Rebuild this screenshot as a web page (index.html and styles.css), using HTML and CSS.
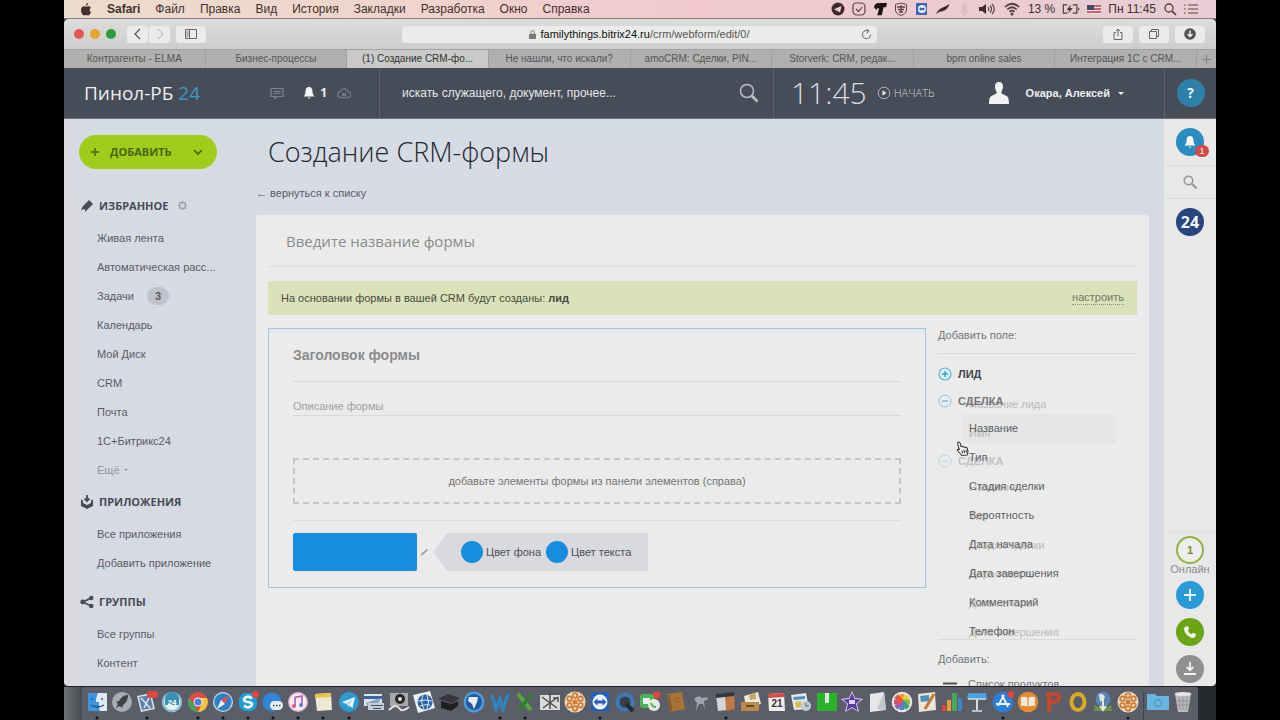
FILE: index.html
```
<!DOCTYPE html>
<html lang="ru">
<head>
<meta charset="utf-8">
<title>Создание CRM-формы</title>
<link rel="stylesheet" href="styles.css">
</head>
<body>
<div class="screen">
  <header class="menubar">
    <nav class="menus">
      <svg class="apple" viewBox="0 0 12 14"><path d="M8.3 0C8.4 1.400 7.200 2.900 5.900 2.900 5.700 1.500 7 .2 8.300 0zM10 7.400c0-1.400 1-2.200 1.300-2.400C10.300 3.400 8.700 3.500 8 3.500c-.8 0-1.300.5-1.900.5S4.700 3.500 4 3.500C2.200 3.500.6 5 .6 7.600.6 10.500 2.600 13.500 4 13.500c.8 0 1.200-.5 2.100-.5.900 0 1.300.5 2.100.5 1.400 0 2.700-2.200 3.200-3.500C10.400 9.500 10 8.500 10 7.400z" fill="#43302e"/></svg>
      <b>Safari</b><span>Файл</span><span>Правка</span><span>Вид</span><span>История</span><span>Закладки</span><span>Разработка</span><span>Окно</span><span>Справка</span>
    </nav>
    <div class="status">
      <svg viewBox="0 0 14 14"><circle cx="7" cy="7" r="6.500" fill="#3f2a2c"/><path d="M3 7.200 10.500 4 9 10.500 6.500 9z" fill="#f0d0d4"/></svg>
      <svg viewBox="0 0 14 14"><path d="M4 1h5a4 4 0 0 1 4 4v4a4 4 0 0 1-4 4H5a4 4 0 0 1-4-4V4a3 3 0 0 1 3-3zM4 7l2.500 2.500L10 5" fill="none" stroke="#5c4548" stroke-width="1.200"/></svg>
      <svg viewBox="0 0 16 14"><path d="M1 5C2 1 4 0 6 0h10l-1 5h-3l-2 9H5l2-8H5L4 8z" fill="#1c1416"/></svg>
      <svg viewBox="0 0 14 14"><path d="M1.500 2.500 7 1l5.500 1.500V8c0 3-3 4.500-5.500 5.500C4.500 12.500 1.500 11 1.500 8z" fill="none" stroke="#5c4548"/><path d="M3 5h8M4 7.500h6M5 10h4M7 3v8" stroke="#5c4548" stroke-width="1.300"/></svg>
      <svg viewBox="0 0 12 14"><rect x="0" y="1" width="11" height="12" fill="#3a66b8"/><circle cx="6" cy="7" r="4" fill="#f0f4fb"/><path d="M3 7l2-2v1h2V5l2 2-2 2V8H5v1z" fill="#3a66b8"/></svg>
      <svg viewBox="0 0 16 14"><path d="M0 13C3 5 9 6 15.500 1 14 7 9 10 4 10z" fill="#3f2a2c"/></svg>
      <svg viewBox="0 0 14 14"><path d="m4 4 6 6-3 3V1l3 3-6 6" fill="none" stroke="#d8b9bd" stroke-width="1.200"/></svg>
      <svg class="wide" viewBox="0 0 18 14"><path d="M1 5h3l4-3v10L4 9H1z" fill="#3f2a2c"/><path d="M10 5q1.500 2 0 4M12 3.500q3 3.500 0 7M14 2q4.500 5 0 10" fill="none" stroke="#5c4548" stroke-width="1.200"/></svg>
      <svg class="wide" viewBox="0 0 18 14"><path d="M2 5q7-6.500 14 0M4.300 7.500q4.700-4.500 9.400 0M6.600 9.800q2.400-2.200 4.800 0" fill="none" stroke="#54393c" stroke-width="1.700"/><circle cx="9" cy="12" r="1.500" fill="#54393c"/></svg>
      <span>13 %</span>
      <svg class="wide" viewBox="0 0 20 14"><path d="M6 2.500H1.500v9H6M12 2.500h4.500v9H12M18.500 5.500v3" fill="none" stroke="#54393c" stroke-width="1.300"/><path d="m10 2-5 6h3l-1 4 5-6H9z" fill="#54393c"/></svg>
      <svg viewBox="0 0 14 14"><rect x="0" y="3" width="14" height="9" fill="#efe3e4"/><path d="M0 4h14M0 7h14M0 10h14" stroke="#b0404d" stroke-width="1.600"/><rect y="3" width="7" height="5" fill="#4c4570"/></svg>
      <span>Пн 11:45</span>
      <svg viewBox="0 0 14 14"><circle cx="6" cy="6" r="4" fill="none" stroke="#54393c" stroke-width="1.300"/><path d="m9 9 4 4" stroke="#54393c" stroke-width="1.700"/></svg>
      <svg viewBox="0 0 14 14"><path d="M0 3h1.500M0 7h1.500M0 11h1.500M4 3h10M4 7h10M4 11h10" stroke="#8f7276" stroke-width="1.300"/></svg>
    </div>
  </header>

  <div class="window">
    <div class="toolbar">
      <div class="tools">
        <span class="light red"></span><span class="light amber"></span><span class="light green"></span>
        <div class="navpair">
          <button class="tool" aria-label="Назад"><svg viewBox="0 0 12 12"><path d="M8 1 3 6l5 5" fill="none" stroke="#555" stroke-width="1.300"/></svg></button>
          <button class="tool" aria-label="Вперёд"><svg viewBox="0 0 12 12"><path d="m4 1 5 5-5 5" fill="none" stroke="#c4c4c4" stroke-width="1.200"/></svg></button>
        </div>
        <button class="tool big" aria-label="Боковая панель"><svg viewBox="0 0 12 12"><path d="M.5 1.500h11v9H.5zM4.500 1.500v9M1.500 4h2M1.500 6h2M1.500 8h2" fill="none" stroke="#666"/></svg></button>
      </div>
      <div class="address">
        <svg viewBox="0 0 8 10"><rect y="4" width="8" height="6" rx="1" fill="#777"/><path d="M2 4V2.500a2 2 0 0 1 4 0V4" fill="none" stroke="#777"/></svg>
        <span><b>familythings.bitrix24.ru</b>/crm/webform/edit/0/</span>
        <svg class="reload" viewBox="0 0 12 12"><path d="M10.500 6A4.500 4.500 0 1 1 8 2M6 0l2.500 2L6.500 4.500" fill="none" stroke="#777" stroke-width="1.100"/></svg>
      </div>
      <div class="tools end">
        <button class="tool big" aria-label="Поделиться"><svg viewBox="0 0 12 12"><path d="M4 4.500H2v7h8v-7H8M6 8V1M4 3l2-2 2 2" fill="none" stroke="#666"/></svg></button>
        <button class="tool big" aria-label="Вкладки"><svg viewBox="0 0 12 12"><path d="M1.500 3.500h7v7h-7zM3.500 3.500v-2h7v7h-2" fill="none" stroke="#666"/></svg></button>
        <button class="tool big" aria-label="Загрузки"><svg viewBox="0 0 12 12"><circle cx="6" cy="6" r="5.800" fill="#505050"/><path d="M6 2.500V8M3.500 6 6 8.700 8.500 6" fill="none" stroke="#eee" stroke-width="1.500"/></svg></button>
      </div>
    </div>
    <nav class="tabs">
      <button class="tab">Контрагенты - ELMA</button>
      <button class="tab">Бизнес-процессы</button>
      <button class="tab current">(1) Создание CRM-фо...</button>
      <button class="tab">Не нашли, что искали?</button>
      <button class="tab">amoCRM: Сделки, PIN...</button>
      <button class="tab">Storverk: CRM, редак...</button>
      <button class="tab">bpm online sales</button>
      <button class="tab">Интеграция 1С с CRM...</button>
      <button class="newtab" aria-label="Новая вкладка"><svg viewBox="0 0 12 12"><path d="M6 1v10M1 6h10" stroke="#7c7c7c"/></svg></button>
    </nav>

    <header class="topbar">
      <div class="brand">
        <a class="logo" href="#">Пинол-РБ <em>24</em></a>
        <div class="alerts">
          <svg viewBox="0 0 14 14"><path d="M1 2.500h12v8H7l-2 2v-2H1zM3.500 5.500h7M3.500 7.500h7" fill="none" stroke="#7d8490" stroke-width="1.200"/></svg>
          <span class="bell"><svg viewBox="0 0 12 14"><path d="M6 1c2.500 0 3.500 2 3.500 4.500S10.500 9 11.500 10.500H.5C1.500 9 2.500 8 2.500 5.500S3.500 1 6 1zM4.500 11.500h3L6 13z" fill="#f3f4f6"/></svg>1</span>
          <svg viewBox="0 0 14 14"><path d="M4 11.500a3 3 0 0 1-.5-6 4 4 0 0 1 7.500 0 3 3 0 0 1 0 6z" fill="none" stroke="#6f7682" stroke-width="1.500"/><path d="M5 7h4v3H5z" fill="#6f7682"/></svg>
        </div>
      </div>
      <div class="search">
        <input type="text" aria-label="Поиск" placeholder="искать служащего, документ, прочее...">
        <svg viewBox="0 0 20 20"><circle cx="8" cy="8" r="6.500" fill="none" stroke="#b9bec7" stroke-width="1.500"/><path d="m12.500 12.500 6 6" stroke="#b9bec7" stroke-width="2.600"/></svg>
      </div>
      <div class="account">
        <span class="clock">11:45</span>
        <button class="start"><svg viewBox="0 0 14 14"><circle cx="7" cy="7" r="5.800" fill="none" stroke="#aeb3bd"/><path d="M5.500 4.200v5.600L9.500 7z" fill="#e8eaee"/></svg>НАЧАТЬ</button>
        <button class="user"><svg viewBox="0 0 20 22"><path d="M10 0c3 0 4.200 2 4 5-.2 2-1 3.500-1.500 4.500v2l5 2.500c2 1 2.200 2.500 2.500 8H0c.3-5.500.5-7 2.500-8l5-2.500v-2C7 8.500 6.200 7 6 5c-.2-3 1-5 4-5z" fill="#f1f2f4"/></svg><span>Окара, Алексей</span><i class="caret"></i></button>
      </div>
      <div class="help"><button class="round teal">?</button></div>
    </header>

    <div class="page">
      <aside class="sidebar">
        <button class="add"><svg viewBox="0 0 10 10"><path d="M5 1v8M1 5h8" stroke="#4b6414" stroke-width="1.500"/></svg><span>ДОБАВИТЬ</span><svg viewBox="0 0 10 10"><path d="m1 3 4 4 4-4" fill="none" stroke="#4b6414" stroke-width="1.600"/></svg></button>
        <section>
          <h2><svg viewBox="0 0 14 14"><path d="M9 1 13 5 5 13 5 10 1 11 3 7z" fill="#454c58"/></svg>ИЗБРАННОЕ<svg class="gear" viewBox="0 0 14 14"><circle cx="7" cy="7" r="3.700" fill="none" stroke="#969ca6" stroke-width="1.500"/><path d="M7 1v2M7 11v2M1 7h2M11 7h2M2.800 2.800l1.300 1.300M9.900 9.900l1.300 1.300M2.800 11.200l1.300-1.300M9.900 4.100l1.300-1.300" stroke="#969ca6" stroke-width="1.500"/></svg></h2>
          <a href="#">Живая лента</a>
          <a href="#">Автоматическая расс...</a>
          <a href="#">Задачи <span class="count">3</span></a>
          <a href="#">Календарь</a>
          <a href="#">Мой Диск</a>
          <a href="#">CRM</a>
          <a href="#">Почта</a>
          <a href="#">1С+Битрикс24</a>
          <a class="more" href="#">Ещё <i class="caret"></i></a>
        </section>
        <section class="spaced">
          <h2><svg viewBox="0 0 14 14"><path d="M7 0v6M4.500 3.500 7 6l2.500-2.500" fill="none" stroke="#454c58" stroke-width="1.800"/><path d="m1 4.500 2 1V8l4 2 4-2V5.500l2-1V11l-6 3-6-3z" fill="#454c58"/></svg>ПРИЛОЖЕНИЯ</h2>
          <a href="#">Все приложения</a>
          <a href="#">Добавить приложение</a>
        </section>
        <section>
          <h2><svg viewBox="0 0 14 14"><path d="M11.500 2.800 3 7l8.500 4.200" fill="none" stroke="#454c58" stroke-width="1.800"/><circle cx="11.300" cy="3" r="2.200" fill="#454c58"/><circle cx="2.700" cy="7" r="2.400" fill="#454c58"/><circle cx="11.300" cy="11" r="2.200" fill="#454c58"/></svg>ГРУППЫ</h2>
          <a href="#">Все группы</a>
          <a href="#">Контент</a>
        </section>
      </aside>

      <main class="main">
        <h1>Создание CRM-формы</h1>
        <a class="back" href="#">← вернуться к списку</a>
        <div class="card">
          <input class="name" type="text" aria-label="Название формы" placeholder="Введите название формы">
          <div class="notice"><span>На основании формы в вашей CRM будут созданы: <b>лид</b></span><a href="#">настроить</a></div>
          <div class="builder">
            <form class="preview">
              <input class="title" type="text" aria-label="Заголовок формы" placeholder="Заголовок формы">
              <input class="descr" type="text" aria-label="Описание формы" placeholder="Описание формы">
              <div class="drop">добавьте элементы формы из панели элементов (справа)</div>
              <div class="submit">
                <button class="send" type="button" aria-label="Отправить"></button>
                <svg class="pencil" viewBox="0 0 10 10"><path d="m1.500 8.500 1-2L8 2l1 1-5 4.700z" fill="#9b9b9b"/></svg>
                <div class="colors">
                  <button type="button"><i></i>Цвет фона</button>
                  <button type="button"><i></i>Цвет текста</button>
                </div>
              </div>
            </form>
            <div class="fields">
              <div class="caption">Добавить поле:</div>
              <div class="tree">
                <button class="group lead"><svg viewBox="0 0 14 14"><circle cx="7" cy="7" r="6" fill="#d9eef5" stroke="#68b4d0" stroke-width="1.200"/><path d="M7 4v6M4 7h6" stroke="#3b9fc4" stroke-width="1.400"/></svg>ЛИД</button>
                <button class="group"><svg viewBox="0 0 14 14"><circle cx="7" cy="7" r="6" fill="#e6eef2" stroke="#9bc0d2"/><path d="M4 7h6" stroke="#6faac4" stroke-width="1.200"/></svg>СДЕЛКА</button>
                <ul>
                  <li class="hover">Название</li><li>Тип</li><li>Стадия сделки</li><li>Вероятность</li><li>Дата начала</li><li>Дата завершения</li><li>Комментарий</li><li>Телефон</li>
                </ul>
                <div class="fading" aria-hidden="true">
                  <ul><li>Название лида</li><li>Имя</li></ul>
                  <div class="group"><svg viewBox="0 0 14 14"><circle cx="7" cy="7" r="6" fill="none" stroke="#6fa4bd"/><path d="M4 7h6" stroke="#6faac4" stroke-width="1.200"/></svg>СДЕЛКА</div>
                  <ul><li>Название</li><li>Тип</li><li>Стадия сделки</li><li>Вероятность</li><li>Дата начала</li><li>Дата завершения</li></ul>
                </div>
                <svg class="pointer" viewBox="0 0 14 16"><path d="M2 1.500c1-.8 2 0 2.200 1L5 5.500c1-.6 1.800-.2 2 .5 1-.6 1.800-.2 2 .6 1-.5 2 0 2.300 1l.7 3-.8 3.400-5.400.5-3-3.500C2 10 1 9.500 1.300 8.700c.5-.8 1.500-.5 2.200.3L1.600 3c-.1-.7 0-1.200.4-1.500zM6 9.500l.5 3M8 9l.5 3M10 8.700l.3 3" fill="#f6f6f6" stroke="#3c3c3c" stroke-width="1.100"/></svg>
              </div>
              <div class="extra">
                <span>Добавить:</span>
                <button><svg viewBox="0 0 14 10"><path d="M0 4.500h14M0 9h14" stroke="#555" stroke-width="2"/></svg>Список продуктов</button>
              </div>
            </div>
          </div>
        </div>
      </main>

      <aside class="rail">
        <div class="stack">
          <button class="round blue" aria-label="Уведомления"><svg viewBox="0 0 12 14"><path d="M6 1c2.500 0 3.500 2 3.500 4.500S10.500 9 11.500 10.500H.5C1.500 9 2.500 8 2.500 5.500S3.500 1 6 1zM4.500 11.500h3L6 13z" fill="#f3f4f6"/></svg><span class="badge">1</span></button>
          <button class="find" aria-label="Найти"><svg viewBox="0 0 14 14"><circle cx="5.500" cy="5.500" r="4.300" fill="none" stroke="#969696" stroke-width="1.600"/><path d="m8.500 8.500 5 5" stroke="#969696" stroke-width="2"/></svg></button>
          <button class="round navy">24</button>
        </div>
        <div class="stack low">
          <div class="online"><button class="round ring">1</button><span>Онлайн</span></div>
          <button class="round azure" aria-label="Добавить"><svg viewBox="0 0 14 14"><path d="M7 1v12M1 7h12" stroke="#eef7fb" stroke-width="1.800"/></svg></button>
          <button class="round leaf" aria-label="Позвонить"><svg viewBox="0 0 14 14"><path d="M3 1.500 5 1l1.200 3-1.400 1.200C5.500 7 7 8.500 8.800 9.200L10 7.800l3 1.300-.5 2C12 12.500 11 13 10 13 5.500 12.500 1.500 8.500 1 4c0-1.200.8-2.200 2-2.500z" fill="#f4f8ec"/></svg></button>
          <button class="round grey" aria-label="Скачать"><svg viewBox="0 0 14 14"><path d="M7 0v8M3.800 5 7 8.300 10.200 5M1 12h12" fill="none" stroke="#f2f2f2" stroke-width="1.800"/></svg></button>
        </div>
      </aside>
    </div>
  </div>

  <footer class="desktop">
    <div class="dock">
      <svg class="on" viewBox="0 0 22 22"><rect x="2" y="2" width="19" height="18" fill="#dfe9f2"/><path d="M2 2h10c-2 4-2 6-2 9h3c0 4 0 6 1 9H2z" fill="#3f94dd"/><path d="M6 7v2M16 7v2M5 14q6 4 13 0" stroke="#234a78" fill="none" stroke-width="1.300"/></svg>
      <svg viewBox="0 0 22 22"><circle cx="11" cy="11" r="10" fill="#a9acb0"/><path d="M17 4c-5 0-7 3-9 6l-3 1 2 2-2 4 4-2 2 2 1-3c3-2 5-5 5-10z" fill="#3c4047"/></svg>
      <svg class="on" viewBox="0 0 22 22"><path d="m1 5 14-3 4 16-14 3z" fill="#d9dfe6"/><path d="m3 6 11-2 3 13-11 2z" fill="#5e7fa6"/><path d="m5 7 9 10M13 7l-5 10" stroke="#dde6ef" stroke-width="1.500"/><rect x="11" width="11" height="7" rx="3" fill="#e2443e"/></svg>
      <svg viewBox="0 0 22 22"><circle cx="11" cy="11" r="10.300" fill="#86bcd2"/><circle cx="11" cy="11" r="8" fill="#e9f2f5"/><path d="M4 8a7 7 0 0 1 14 0v6H4z" fill="#3a8fb3"/><text x="11" y="14" text-anchor="middle">24</text></svg>
      <svg class="on" viewBox="0 0 22 22"><circle cx="11" cy="11" r="10" fill="#dc4e41"/><path d="M2 6.500 8 15l3 6A10 10 0 0 1 2 6.500z" fill="#4ba35b"/><path d="M11 7h9a10 10 0 0 1-9 14l4-8z" fill="#f2c83b"/><circle cx="11" cy="11" r="4.500" fill="#f4f4f4"/><circle cx="11" cy="11" r="3.500" fill="#4a83d6"/></svg>
      <svg class="on" viewBox="0 0 22 22"><circle cx="11" cy="11" r="10" fill="#c9d9e6"/><circle cx="11" cy="11" r="8.700" fill="#2c80c8"/><path d="m17 4-4 9-4-4z" fill="#e45045"/><path d="m5 18 4-9 4 4z" fill="#f0f0f0"/></svg>
      <svg class="on" viewBox="0 0 22 22"><rect x="2" y="2" width="18" height="18" rx="7" fill="#1ba0dc"/><path d="M15 7.500Q11 4 8 7t3 4 3 4-7-.5" stroke="#fff" stroke-width="2.500" fill="none"/><circle cx="18.500" cy="3.500" r="3.500" fill="#e2443e"/></svg>
      <svg class="on" viewBox="0 0 22 22"><circle cx="10" cy="11" r="9.500" fill="#2f86d8"/><rect x="8" y="10" width="13" height="9" rx="4.500" fill="#e9eef3"/><path d="M11 14.500h1.500M14 14.500h1.500M17 14.500h1.500" stroke="#345" stroke-width="1.600"/></svg>
      <svg class="on" viewBox="0 0 22 22"><circle cx="11" cy="11" r="10" fill="#e7b7cf"/><circle cx="11" cy="11" r="8.500" fill="#f2eff3"/><path d="M8 15V6.500l7-1.500v9" stroke="#b154b9" stroke-width="1.600" fill="none"/><circle cx="7" cy="15" r="2" fill="#e4577e"/><circle cx="14" cy="14" r="2" fill="#5f79dc"/></svg>
      <svg class="on" viewBox="0 0 22 22"><path d="m3 3 16-1 1 17-15 1z" fill="#ece8d6"/><path d="m3 3 16-1v4L3 7z" fill="#e5c64c"/></svg>
      <svg class="on" viewBox="0 0 22 22"><circle cx="11" cy="11" r="10" fill="#2c9bd4"/><path d="m4 11 13-5-2.500 11-4-3z" fill="#eff6fa"/><path d="m8 12 7-4-4 6v3z" fill="#b8d5e4"/></svg>
      <svg viewBox="0 0 22 22"><path d="M1 3h18v12H1z" fill="#dfe4eb"/><path d="M1 5h18v3H1z" fill="#3b68a4"/><path d="M3 12 17 7v4L4 15z" fill="#8da4c6"/><path d="M5 12h16v7H5z" fill="#c6ccd6"/><path d="M8 14h12v1H8zM10 17h8v1h-8z" fill="#3c4f6d"/></svg>
      <svg viewBox="0 0 22 22"><path d="M2 2h18v13H2z" fill="#a6a8aa"/><circle cx="12" cy="8" r="5" fill="#242424"/><circle cx="12" cy="8" r="2" fill="#ddd"/><path d="M1 19q7-7 10-2t10-1" stroke="#e0e0e0" fill="none" stroke-width="2"/></svg>
      <svg viewBox="0 0 22 22"><path d="m0 4 17-4 5 17-17 5z" fill="#eef1f5"/><circle cx="12" cy="11" r="7.500" fill="#2864a8"/><path d="M5 10q7-2 14 0M7 15q5-2 10-1M10 4q-3 7 1 14M14 4q3 7 0 14" stroke="#dde6f2" fill="none"/></svg>
      <svg viewBox="0 0 22 22"><path d="m0 8 10-5 12 4-8 5z" fill="#343638"/><path d="M3 10v7l10 3 7-5v-5l-6 3z" fill="#1d1f20"/></svg>
      <svg viewBox="0 0 22 22"><circle cx="11" cy="11" r="10.500" fill="#4a9ddb"/><circle cx="11" cy="11" r="8" fill="#235a9d"/><path d="M6 6h9l-1 5-3 7-2-5-4-3z" fill="#e8eff4"/></svg>
      <svg class="on" viewBox="0 0 22 22"><path d="m3 4 4 14 4-10 3 10 5-15" stroke="#3381bb" stroke-width="3.500" fill="none"/></svg>
      <svg class="on" viewBox="0 0 22 22"><path d="m4 3 13 16" stroke="#55a83f" stroke-width="4"/><path d="M18 3 4 20" stroke="#347c2b" stroke-width="3.500"/></svg>
      <svg viewBox="0 0 22 22"><path d="M1 4h20v15H1z" fill="#d9dadb"/><path d="m3 6 15 11M19 6 4 17M11 1v17M14 7h5v4" stroke="#4b4d50" stroke-width="1.500" fill="none"/></svg>
      <svg viewBox="0 0 22 22"><circle cx="11" cy="11" r="10.500" fill="#f0d8bb"/><g fill="none" stroke="#cf7a35" stroke-width="1.700"><circle cx="11" cy="4.500" r="2.300"/><circle cx="16.500" cy="7.700" r="2.300"/><circle cx="16.500" cy="14.300" r="2.300"/><circle cx="11" cy="17.500" r="2.300"/><circle cx="5.500" cy="14.300" r="2.300"/><circle cx="5.500" cy="7.700" r="2.300"/></g><circle cx="11" cy="11" r="2.500" fill="#cf7a35"/></svg>
      <svg class="on" viewBox="0 0 22 22"><rect x="2" y="1" width="18" height="19" fill="#245fbb"/><circle cx="11" cy="11" r="7.500" fill="#eef3fa"/><path d="m4.500 11 4-3.500v2h5v-2l4 3.500-4 3.500v-2h-5v2z" fill="#245fbb"/></svg>
      <svg viewBox="0 0 22 22"><circle cx="11" cy="11" r="7.500" fill="#3a4046" stroke="#3d79b8" stroke-width="4"/><path d="m12 13 7 7" stroke="#252a30" stroke-width="4"/></svg>
      <svg viewBox="0 0 22 22"><rect x="1" y="3" width="15" height="14" rx="3" fill="#4cb35a"/><path d="M4 7h7v6H4z" fill="#e7f2e8"/><circle cx="15" cy="14" r="6" fill="#e4ece5"/><path d="M12 12q1 4 5 4" stroke="#4cb35a" stroke-width="2" fill="none"/><circle cx="18" cy="4" r="3.500" fill="#e2443e"/></svg>
      <svg viewBox="0 0 22 22"><path d="m2 3 15-2 3 17-15 3z" fill="#a87337"/><path d="m4 4 2 16" stroke="#75502a" stroke-width="1.500"/><path d="m9 8 6-1M10 11l6-1" stroke="#8a5c2c"/></svg>
      <svg viewBox="0 0 22 22"><path d="M4 8q5-5 8-1l6-1-1 3-3 1 1 9-2-6H9l-3 7 1-8z" fill="#9fa2a6"/></svg>
      <svg class="on" viewBox="0 0 22 22"><path d="m1 4 9-2 2 17-9 1z" fill="#d3d5d7"/><path d="m10 3 9-2 1 17-9 2z" fill="#bf7748"/><path d="m1 3 18-2v4L1 7z" fill="#33373d"/></svg>
      <svg viewBox="0 0 22 22"><path d="m4 5 14-4 3 12-15 3z" fill="#ece9df"/><path d="M1 11h18v9H1z" fill="#b98a50"/><path d="M6 14h8v2H6z" fill="#6d4b28"/><path d="m9 4 7-2v6l-6 1z" fill="#c9a764"/></svg>
      <svg viewBox="0 0 22 22"><path d="m3 3 16-1 1 18H4z" fill="#eeeeef"/><path d="m3 3 16-1v4L3 7z" fill="#dd4c42"/><text class="dark" x="12" y="16" text-anchor="middle">21</text></svg>
      <svg viewBox="0 0 22 22"><path d="m1 4 15-2 3 16-15 1z" fill="#e4e7e4"/><path d="m3 6 12-1v3L4 9z" fill="#4e8fc4"/><path d="m5 11 6-1 1 6-6 1z" fill="#d6ba55"/><circle cx="16" cy="15" r="5" fill="#bfcdd2"/><path d="M16 12v3h3" stroke="#567" fill="none"/></svg>
      <svg viewBox="0 0 22 22"><path d="M1 2h20v18H1z" fill="#2bb32e"/><path d="M9 2h4v10H9z" fill="#d7efd5"/></svg>
      <svg viewBox="0 0 22 22"><path d="m11 0 3 7 8 1-6 5 2 8-7-4-7 4 2-8-6-5 8-1z" fill="#d8cfeb"/><path d="m11 2 2.500 6 6.500.7-5 4 1.600 6.800-5.600-3.500-5.600 3.500L7 12.700l-5-4L8.500 8z" fill="#5b3aa0"/><path d="M8 9h6v4H8z" fill="#ddd3f0"/></svg>
      <svg viewBox="0 0 22 22"><path d="m4 3 14-2 2 18-16 2z" fill="#e6e7e9"/><path d="m18 1-7 17 9 1z" fill="#c3c6ca"/></svg>
      <svg viewBox="0 0 22 22"><circle cx="11" cy="11" r="10.300" fill="#eceae6"/><g fill="none" stroke-width="5"><path d="M11 11V3" stroke="#f09a37"/><path d="m11 11 6-6" stroke="#e8cf3d"/><path d="M11 11h8" stroke="#8dbb46"/><path d="m11 11 6 6" stroke="#43a07c"/><path d="M11 11v8" stroke="#4a87c9"/><path d="m11 11-6 6" stroke="#8d64b4"/><path d="M11 11H3" stroke="#cf4e80"/><path d="M11 11 5 5" stroke="#e0583d"/></g></svg>
      <svg viewBox="0 0 22 22"><path d="m2 3 17-2 1 18-17 2z" fill="#ece5d9"/><path d="m4 5 9-1v6l-8 1z" fill="#4d90bd"/><path d="M18 3 9 18" stroke="#c17b34" stroke-width="3"/></svg>
      <svg viewBox="0 0 22 22"><path d="M1 14h4v6H1z" fill="#db4a3d"/><path d="M6 9h4v11H6z" fill="#e5a03a"/><path d="M11 2h5v18h-5z" fill="#4ba65a"/><path d="M17 7h4v13h-4z" fill="#3f86c5"/></svg>
      <svg viewBox="0 0 22 22"><path d="M2 2h18l1 6H1z" fill="#4aa3dd"/><path d="M11 8v11" stroke="#d9dde1" stroke-width="2"/><path d="M6 20h10M2 8h18" stroke="#d9dde1" stroke-width="1.500"/></svg>
      <svg class="on" viewBox="0 0 22 22"><circle cx="11" cy="11" r="10.300" fill="#2c7fd8"/><path d="M12 4 6 15M10 4l6 12M4 13h14" stroke="#edf4fb" stroke-width="1.800"/><circle cx="19" cy="3.500" r="3.500" fill="#e2443e"/></svg>
      <svg viewBox="0 0 22 22"><circle cx="11" cy="11" r="10.300" fill="#e58a32"/><path d="M4 6q4-1 7 1 3-2 7-1v9q-4-1-7 1-3-2-7-1z" fill="#f6e8d8"/><path d="M11 7v9" stroke="#d87d2b"/></svg>
      <svg viewBox="0 0 22 22"><path d="M7 21V3M4 4c8-3 14-1 13 3s-5 5-10 4" fill="none" stroke="#c44730" stroke-width="4"/></svg>
      <svg viewBox="0 0 22 22"><ellipse cx="11" cy="11" rx="6.500" ry="8" fill="none" stroke="#d8ab28" stroke-width="4"/></svg>
      <svg viewBox="0 0 22 22"><circle cx="11" cy="8" r="7.500" fill="#5a83b3"/><path d="M7 3q5-1 6 4l-5 4z" fill="#dce6e8"/><path d="M3 14q8 6 16 0l1 6H2z" fill="#6c9548"/><path d="M11 8v10M8 15l3 4 3-4" stroke="#e1e8df" stroke-width="2" fill="none"/></svg>
      <svg class="on" viewBox="0 0 22 22"><circle cx="11" cy="11" r="10.500" fill="#f0d8bb"/><g fill="none" stroke="#cf7a35" stroke-width="1.700"><circle cx="11" cy="4.500" r="2.300"/><circle cx="16.500" cy="7.700" r="2.300"/><circle cx="16.500" cy="14.300" r="2.300"/><circle cx="11" cy="17.500" r="2.300"/><circle cx="5.500" cy="14.300" r="2.300"/><circle cx="5.500" cy="7.700" r="2.300"/></g><circle cx="11" cy="11" r="2.500" fill="#cf7a35"/></svg>
      <span class="rule"></span>
      <svg viewBox="0 0 22 22"><path d="M0 3h8l2 2h12v14H0z" fill="#6bb6e0"/><circle cx="11" cy="12" r="3.500" fill="none" stroke="#4e9bc8" stroke-width="1.500"/></svg>
      <svg viewBox="0 0 22 22"><path d="M3 3h16l-3 18H6z" fill="#b8babc"/><ellipse cx="11" cy="3" rx="8.500" ry="2" fill="#e6e6e7"/><path d="m7 6 1 13M11 6v13M15 6l-1 13M5 10h12M5 14h12" stroke="#8b8e92" stroke-width=".8"/></svg>
    </div>
  </footer>
</div>
</body>
</html>
```
FILE: styles.css
```
* { box-sizing: border-box; }
body { margin: 0; background: #000; font: 11px/16px "Liberation Sans", Arial, sans-serif; color: #575c66; }
button, input { font: inherit; color: inherit; border: 0; background: none; padding: 0; margin: 0; }
a { color: inherit; text-decoration: none; }
svg { display: block; flex: none; }
h1, h2, ul { margin: 0; padding: 0; font-weight: normal; list-style: none; }

.screen { height: 100vh; margin: 0 5%; display: flex; flex-direction: column; background: #3c3e46; }

.menubar { height: 19px; flex: none; display: flex; align-items: center; justify-content: space-between; padding: 0 18px 0 16px; font-size: 12px; color: #43302e; background: linear-gradient(90deg, #ecdccb, #f0d2cd 35%, #f1c9cd 55%, #e6ced4); border-bottom: 1px solid #8d7a7c; }
.menus { display: flex; gap: 15px; align-items: center; }
.apple { width: 12px; height: 13px; }
.status { display: flex; gap: 7px; align-items: center; white-space: nowrap; }
.status svg { width: 14px; height: 14px; }
.status .wide { width: 18px; }

.window { flex: 1; min-height: 0; display: flex; flex-direction: column; border-radius: 5px; overflow: hidden; background: #e9eaea; }
.toolbar { height: 30px; flex: none; display: flex; align-items: center; justify-content: space-between; padding: 0 11px 0 10px; background: linear-gradient(#dcdcda, #cdcdcc); }
.tools { flex: 1; display: flex; align-items: center; gap: 6px; }
.tools.end { justify-content: flex-end; }
.light { width: 10px; height: 10px; border-radius: 50%; }
.red { background: #e5584f; }
.amber { background: #e5a532; }
.green { background: #319a3d; }
.navpair { display: flex; gap: 1px; margin-left: 5px; }
.tool { width: 21px; height: 17px; border-radius: 3px; background: #ebebea; display: grid; place-items: center; }
.tool.big { width: 30px; }
.tool svg { width: 12px; height: 12px; }
.address { width: 42%; height: 17px; border-radius: 3px; background: #ebebea; display: flex; align-items: center; justify-content: center; gap: 4px; color: #555; padding: 0 5px; font-size: 11px; position: relative; }
.address b { font-weight: normal; color: #111; }
.address svg { width: 7px; height: 9px; }
.address .reload { width: 11px; height: 11px; position: absolute; right: 5px; top: 3px; }

.tabs { height: 19px; flex: none; display: flex; background: #b0b0b0; border-top: 1px solid #a2a2a2; font-size: 10px; color: #555; }
.tab { flex: 1; min-width: 0; border-right: 1px solid #a0a0a0; white-space: nowrap; overflow: hidden; }
.tab.current { background: #c9c9c8; color: #333; }
.newtab { width: 19px; display: grid; place-items: center; }
.newtab svg { width: 11px; height: 11px; }

.topbar { height: 51px; flex: none; display: flex; background: #474c59; color: #eceef1; border-bottom: 1px solid #6d717b; }
.topbar > div { display: flex; align-items: center; }
.brand { width: 315px; padding: 0 28px 0 20px; justify-content: space-between; }
.logo { font: 19px/28px "Open Sans", sans-serif; white-space: nowrap; }
.logo em { font-style: normal; color: #3f96cb; }
.alerts { display: flex; align-items: center; gap: 18px; }
.alerts svg { width: 14px; height: 14px; }
.bell { display: flex; align-items: center; gap: 4px; font: bold 12px/16px "Open Sans", sans-serif; margin-right: -8px; }
.search { flex: 1; border-left: 1px solid #5c616d; padding: 0 14px 0 22px; }
.search input { flex: 1; min-width: 0; outline: 0; font-size: 12px; }
.search input::placeholder { color: #e3e5e9; opacity: 1; }
.search svg { width: 20px; height: 20px; }
.account { width: 391px; border-left: 1px solid #5c616d; padding: 0 40px 0 17px; }
.clock { font: 300 30px/40px "Open Sans", sans-serif; color: #d8dbe0; }
.start { display: flex; align-items: center; gap: 3px; margin-left: 10px; font: 300 11px/16px "Open Sans", sans-serif; color: #d5d8dd; }
.start svg { width: 14px; height: 14px; }
.user { display: flex; align-items: center; margin-left: auto; font-weight: bold; white-space: nowrap; }
.user svg { width: 20px; height: 22px; margin-right: 17px; }
.caret { display: inline-block; border: 3px solid transparent; border-top-color: currentColor; border-bottom: 0; margin-left: 8px; }
.help { width: 52px; border-left: 1px solid #5c616d; justify-content: center; }
.round { width: 28px; height: 28px; border-radius: 50%; display: grid; place-items: center; color: #f0f5f8; position: relative; flex: none; }
.round svg { width: 14px; height: 14px; }
.teal { background: #2f80a9; font: bold 14px/20px "Open Sans", sans-serif; }
.blue { background: #2a8dc2; }
.navy { background: #27467f; font: bold 16px/20px "Open Sans", sans-serif; }
.azure { background: #2a9bd7; }
.leaf { background: #6ba516; }
.grey { background: #8e9092; }
.ring { border: 2px solid #92b243; color: #6c8a2c; font-weight: bold; background: #eeefec; }

.page { flex: 1; min-height: 0; display: flex; background: linear-gradient(#d5dce5, #d7dae3 110px); }
.sidebar { width: 192px; flex: none; padding: 16px 15px 0; background: linear-gradient(90deg, #dcdae0, transparent 24px); }
.add { width: 138px; height: 34px; border-radius: 17px; background: #a0cd1c; display: flex; align-items: center; padding: 0 14px 0 11px; margin-bottom: 19px; font: bold 11px/16px "Open Sans", sans-serif; color: #4b6414; }
.add span { flex: 1; text-align: left; padding-left: 10px; }
.add svg { width: 10px; height: 10px; }
.spaced { margin-bottom: 7px; }
.sidebar h2 { height: 35px; display: flex; align-items: center; gap: 5px; padding-left: 1px; font: bold 11px/16px "Open Sans", sans-serif; color: #454c58; }
.sidebar h2 svg { width: 14px; height: 14px; }
.sidebar h2 .gear { width: 11px; height: 11px; margin-left: 4px; }
.sidebar a { display: flex; align-items: center; height: 29px; padding-left: 18px; white-space: nowrap; }
.sidebar .more { color: #9297a1; }
.more .caret { border-width: 2px; border-bottom: 0; margin-left: 4px; }
.count { margin-left: 13px; width: 22px; height: 18px; border-radius: 9px; background: #bfc2c9; text-align: center; font-weight: bold; line-height: 18px; }

.main { flex: 1; min-width: 0; display: flex; flex-direction: column; padding-right: 15px; }
h1 { font: 300 27px/40px "Open Sans", sans-serif; color: #23272f; padding: 13px 12px 0; }
.back { padding: 13px 0 14px; }
.card { flex: 1; min-height: 0; background: #ebebeb; border-radius: 3px 3px 0 0; padding: 0 12px; }
.name { width: 100%; height: 52px; padding: 0 18px; border-bottom: 1px solid #dcdcdc; font: 15px/24px "Open Sans", sans-serif; display: block; }
input::placeholder { color: #8c8c8c; opacity: 1; }
.notice { display: flex; align-items: center; justify-content: space-between; height: 34px; margin: 14px 0 13px; padding: 0 13px; background: #dbe2b9; color: #484b42; }
.notice a { color: #72776a; line-height: 13px; border-bottom: 1px dotted #8d927f; }
.builder { display: flex; gap: 12px; align-items: flex-start; }
.preview { flex: 1; min-width: 0; border: 1px solid #a9c1dc; padding: 0 24px 16px; box-shadow: inset 0 5px 5px -2px #e0e8f4; }
.preview input { display: block; width: 100%; border-bottom: 1px solid #d9d9d9; }
.title { height: 53px; font-size: 14px; font-weight: bold; }
.descr { height: 20px; margin-top: 14px; }
.descr::placeholder { color: #a0a0a0; }
.drop { height: 46px; margin: 42px 0 16px; border: 2px dashed #c6c6c6; display: grid; place-items: center; color: #747474; }
.submit { display: flex; align-items: center; border-top: 1px solid #dcdcdc; padding-top: 12px; }
.send { width: 124px; height: 38px; background: #198ddd; border-radius: 2px; }
.pencil { width: 10px; height: 10px; margin: 0 4px 0 2px; }
.colors { display: flex; align-items: center; gap: 5px; height: 38px; padding: 0 17px 0 28px; background: #d9dae0; color: #4c4f57; clip-path: polygon(0 50%, 14px 0, 100% 0, 100% 100%, 14px 100%); }
.colors button { display: flex; align-items: center; gap: 3px; }
.colors i { width: 22px; height: 22px; border-radius: 50%; background: #198ddd; }

.fields { width: 199px; flex: none; color: #757575; }
.caption { height: 26px; padding-bottom: 4px; line-height: 14px; border-bottom: 1px solid #d8d8d8; }
.tree { position: relative; padding-top: 6px; border-bottom: 1px solid #dadada; height: 286px; }
.group { display: flex; align-items: center; gap: 6px; height: 27px; font-weight: bold; color: #777; }
.lead { color: #404348; }
.group svg { width: 14px; height: 14px; }
.tree li { height: 29px; line-height: 29px; padding-left: 6px; margin: 0 21px 0 25px; color: #606060; }
.tree .hover { background: #e6e6e6; }
.fading { position: absolute; left: 0; right: 0; top: 36px; opacity: .35; }
.fading .group { height: 25px; }
.pointer { position: absolute; left: 18px; top: 87px; width: 14px; height: 16px; }
.extra span { display: block; padding: 11px 0 9px; }
.extra button { display: flex; align-items: center; gap: 11px; padding-left: 5px; }
.extra svg { width: 14px; height: 10px; }

.rail { width: 52px; flex: none; background: #e9e8e9; display: flex; flex-direction: column; justify-content: space-between; }
.stack { display: flex; flex-direction: column; align-items: center; padding: 9px 0 3px; }
.badge { position: absolute; right: -5px; bottom: -1px; width: 14px; height: 12px; border-radius: 6px; background: #d04b45; font-size: 9px; line-height: 12px; text-align: center; }
.find { width: 100%; height: 34px; margin: 9px 0; border: solid #dddddf; border-width: 1px 0; display: grid; place-items: center; }
.find svg { width: 14px; height: 14px; }
.low { gap: 9px; padding-top: 4px; border-top: 1px solid #dfdfdf; }
.online { text-align: center; display: flex; flex-direction: column; align-items: center; color: #8b8b8b; margin-bottom: -2px; }
.online span { line-height: 10px; }

.desktop { height: 34px; flex: none; background: linear-gradient(90deg, #6d7074, #3e4043 2%, #2d3038 97%, #24262c); padding: 0 18px; border-top: 1px solid #22232a; }
.dock { height: 100%; background: #5b5d68; border-radius: 3px 3px 0 0; display: flex; justify-content: space-between; padding: 4px 4px 0; }
.dock svg { width: 22px; height: 29px; padding-bottom: 7px; }
.dock .on { background: radial-gradient(circle at 11px 27px, #15161a 1px, transparent 2px); }
.dock text { font: bold 8px "Liberation Sans", sans-serif; fill: #fff; }
.dock .dark { font-size: 10px; fill: #333; }
.rule { width: 1px; background: #43454d; }
```
